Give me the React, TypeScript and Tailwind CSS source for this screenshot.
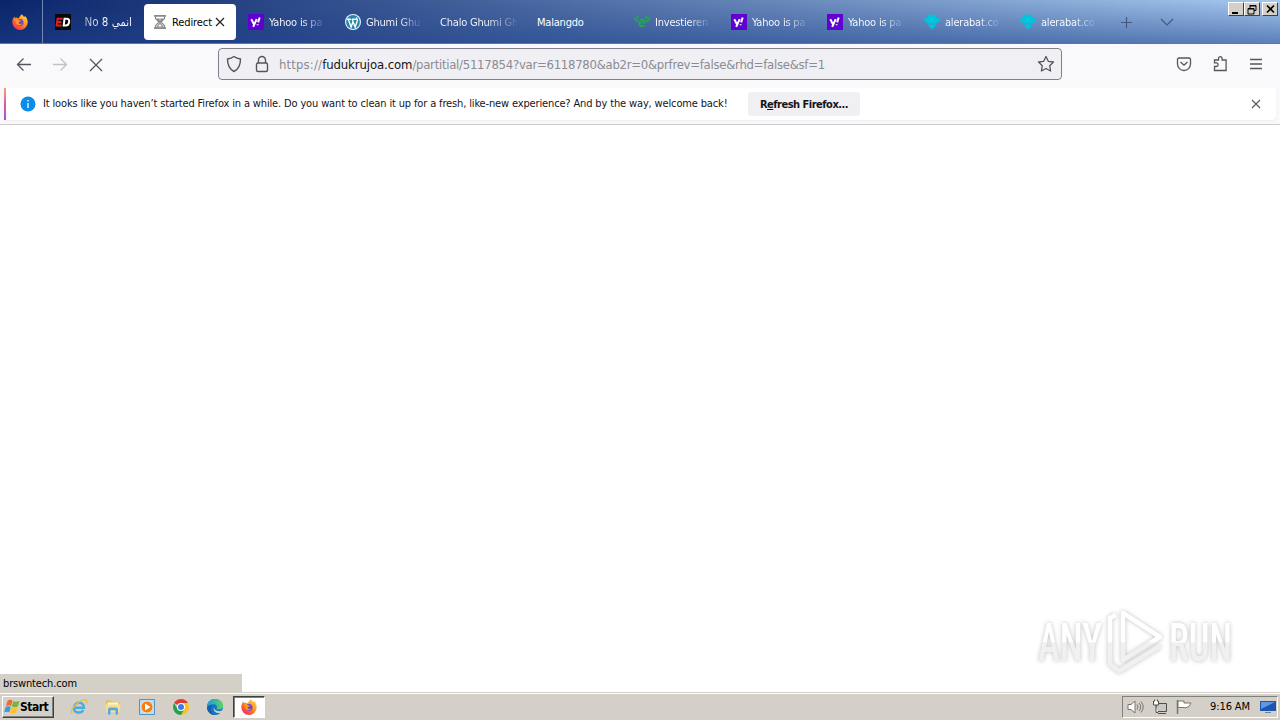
import type { ReactNode } from "react";

const uiFont = "font-['DejaVu_Sans_Condensed','DejaVu_Sans','Noto_Sans',sans-serif] [font-stretch:condensed]";

function FirefoxLogo() {
  return (
    <svg viewBox="0 0 16 16" className="size-4 shrink-0">
      <defs>
        <linearGradient id="ff" x1="1" y1="0" x2="0.2" y2="1">
          <stop offset="0" stopColor="#ffe44a" />
          <stop offset="0.45" stopColor="#ff9a1f" />
          <stop offset="0.8" stopColor="#fa4c3c" />
          <stop offset="1" stopColor="#ec2670" />
        </linearGradient>
      </defs>
      <path d="M10 .2c1 1.300 1.500 2.100 2.200 2.700L13 2c1.600 1.500 2.700 3.700 2.700 6.300A7.700 7.700 0 0 1 .3 8.300C.3 6 1.100 4.100 2.400 2.600l.5 1.500 1.800-.6 1.200 1C7.600 3.800 8 1.500 10 .2z" fill="url(#ff)" />
      <circle cx="8" cy="8.600" r="3.500" fill="#7542c9" />
      <path d="M3.200 5.200c1.500-.6 3 0 4 1l1.600.3c-.2 1.100-1.700 1.300-2.300 2 .4 1.500 2.300 2 3.800 1.100-1 2.200-5.200 2.300-6.400-.7z" fill="#ff9420" />
    </svg>
  );
}

function YahooIcon() {
  return (
    <svg viewBox="0 0 16 16" className="size-4 shrink-0">
      <path d="M0 0h16v16H0z" fill="#5f01d1" />
      <path d="M3.300 5.200 6 10.200M8.700 5.200 5.200 12.800M11.700 3.500 10.100 8.400M9.600 10.200v1" stroke="#fff" strokeWidth="2" fill="none" />
    </svg>
  );
}

function EdIcon() {
  return (
    <svg viewBox="0 0 16 16" className="size-4 shrink-0">
      <path d="M0 0h16v16H0z" fill="#080808" />
      <path d="M7.500 4.700H2.600l-1 6.700h5M2.400 8h4" stroke="#e51c23" strokeWidth="2" fill="none" />
      <path d="M9.500 4.700h2.800c3 0 2.300 6.700-1.300 6.700H8.700z" stroke="#fff" strokeWidth="2" fill="none" />
    </svg>
  );
}

function HourglassIcon() {
  return (
    <svg viewBox="0 0 16 16" className="size-4 shrink-0" fill="none" stroke="#8c8c8c">
      <path d="M2 1.800h12M2 14.200h12" strokeWidth="1.800" />
      <path d="M3.500 2v2.500L7 8l-3.500 3.500V14M12.500 2v2.500L9 8l3.500 3.500V14M5.500 5h5L8 7.500zM8 9l-3 4h6z" strokeWidth="1.200" />
    </svg>
  );
}

function WordPressIcon() {
  return (
    <svg viewBox="0 0 16 16" className="size-4 shrink-0">
      <circle cx="8" cy="8" r="8" fill="#e9f5fa" />
      <circle cx="8" cy="8" r="6.900" fill="#2585ac" />
      <path d="M2 5.200h4M7.200 5.200h4M3.300 5.200l2.800 8L8 7.600l2.200 5.600 2.100-6.300c.3-1.500-.9-2-.5-3.400M7 5l1 2.600" stroke="#fff" strokeWidth="1.400" fill="none" />
    </svg>
  );
}

function InvestIcon() {
  return (
    <svg viewBox="0 0 16 16" className="size-4 shrink-0" fill="none" stroke="#21a852" strokeWidth="1.800">
      <path d="M1 3.500c0 3 1.200 3.500 2.800 3.500M15 3.500c0 3-1.200 3.500-2.800 3.500M3.500 2v3M12.500 2v3" />
      <path d="M5.500 8.700h5.300c0-4-5.600-4-5.600 0s3.500 4.500 5.300 2.700" />
    </svg>
  );
}

function AlerabatIcon() {
  return (
    <svg viewBox="0 0 16 16" className="size-4 shrink-0" fill="#00c5dc">
      <path d="M4 .5h2.500L8 2 9.500.5H12V4h3.500v3L13 9h-1.500v3L8 15.500 4.500 12V9H3L.5 7V4H4z" />
      <path d="M5.700 9h1.200v2H5.700zM9.100 9h1.200v2H9.100z" fill="#5788c0" />
    </svg>
  );
}

type Tab = { title: string; icon?: ReactNode; width: string; fade?: boolean };

const tabs: Tab[] = [
  { title: "Yahoo is pa", icon: <YahooIcon />, width: "w-[97px]", fade: true },
  { title: "Ghumi Ghu", icon: <WordPressIcon />, width: "w-[95px]", fade: true },
  { title: "Chalo Ghumi Gh", width: "w-[97px]", fade: true },
  { title: "Malangdo", width: "w-[97px]" },
  { title: "Investieren", icon: <InvestIcon />, width: "w-[97px]", fade: true },
  { title: "Yahoo is pa", icon: <YahooIcon />, width: "w-[96px]", fade: true },
  { title: "Yahoo is pa", icon: <YahooIcon />, width: "w-[97px]", fade: true },
  { title: "alerabat.co", icon: <AlerabatIcon />, width: "w-[96px]", fade: true },
  { title: "alerabat.co", icon: <AlerabatIcon />, width: "w-[96px]", fade: true },
];

function WindowButton({ children }: { children: ReactNode }) {
  return (
    <div className="flex h-[14px] w-4 border border-t-white border-r-[#404040] border-b-[#404040] border-l-white bg-[#d4d0c8]">
      <svg viewBox="0 0 14 12" className="h-3 w-3.5">{children}</svg>
    </div>
  );
}

function TabStrip() {
  return (
    <div className="relative flex h-11 border-b border-[#6a748f] bg-[linear-gradient(180deg,#1e428c00,#1e428c8c),linear-gradient(90deg,#0a246a,#a6caf0)]">
      <div className="flex w-[43px] items-center border-r border-[#7486b4] pl-3">
        <FirefoxLogo />
      </div>
      <div className="flex w-[101px] items-center pl-3 text-white">
        <EdIcon />
        <span
          dir="rtl"
          className="mt-0.5 ml-2 w-[53px] whitespace-nowrap bg-linear-to-r from-white/50 to-white to-50% bg-clip-text text-[11.5px] text-transparent"
        >
          انمي No 8
        </span>
      </div>
      <div className="mt-1 flex h-9 w-[92px] items-center rounded bg-white pl-2 text-black">
        <HourglassIcon />
        <span className="mt-0.5 ml-1 w-[42px] whitespace-nowrap text-[11px] tracking-[-0.1px]">Redirect</span>
        <svg viewBox="0 0 12 12" className="size-3" stroke="#222" strokeWidth="1.200">
          <path d="m2 2 8 8M10 2l-8 8" />
        </svg>
      </div>
      <div className="ml-3 flex">
        {tabs.map((tab, i) => (
          <div key={i} className={`flex h-11 items-center gap-[5px] ${tab.width}`}>
            {tab.icon}
            <span
              className={`mt-0.5 whitespace-nowrap text-[11px] tracking-[-0.2px] ${tab.icon ? "w-[55px]" : "w-[77px]"} ${
                tab.fade ? "bg-linear-to-r from-white from-60% to-white/10 bg-clip-text text-transparent" : "text-white"
              }`}
            >
              {tab.title}
            </span>
          </div>
        ))}
      </div>
      <svg viewBox="0 0 60 16" className="mt-[14px] ml-0.5 h-4 w-[60px]" fill="none" stroke="#47587d" strokeWidth="1.200">
        <path d="M3 8.500h11M8.500 3v11M43 5l6 6 6-6" />
      </svg>
      <div className="absolute top-0.5 right-0.5 flex">
        <WindowButton>
          <path d="M3 9h6v2H3z" fill="#000" />
        </WindowButton>
        <WindowButton>
          <path d="M5 2.500h6v5H9M5 2v3M3 5.500h6V11H3zM3 6h6M5 3h6" stroke="#000" fill="none" />
        </WindowButton>
        <div className="w-0.5" />
        <WindowButton>
          <path d="m4 2.500 7 7M11 2.500l-7 7" stroke="#000" strokeWidth="1.700" />
        </WindowButton>
      </div>
    </div>
  );
}

function Toolbar() {
  return (
    <div className="flex h-11 items-center bg-[#f9f9fb] pb-1">
      <svg viewBox="0 0 110 20" className="ml-[10px] h-5 w-[110px]" fill="none" stroke="#55555f" strokeWidth="1.300">
        <path d="M21 10.500H7.500m6-6-6 6 6 6" />
        <path d="M43 10.500h13.500m-6-6 6 6-6 6" stroke="#c2c2c6" />
        <path d="m80 5 12 12m0-12L80 17" />
      </svg>
      <div className="ml-[98px] flex h-8 w-[844px] items-center rounded border border-[#80808a] bg-[#f0f0f4] px-[7px]">
        <svg viewBox="0 0 44 18" className="h-[18px] w-11" fill="none" stroke="#55555f" strokeWidth="1.400">
          <path d="M8 1.500c2 1.500 4 2.200 6.500 2.500 0 6-1.500 10-6.500 12.500C3 14 1.500 10 1.500 4 4 3.700 6 3 8 1.500z" />
          <rect x="30.500" y="8" width="11" height="8.500" rx="1.500" />
          <path d="M32.500 8V5a3.500 3.500 0 0 1 7 0v3" />
        </svg>
        <span className="ml-[9px] flex-1 pt-px whitespace-nowrap text-[13px] tracking-[-0.27px] text-[#8b8b92]">
          <span className="tracking-[0.15px]">https://</span>
          <span className="tracking-[-0.1px] text-[#15141a]">fudukrujoa.com</span>
          /partitial/5117854?var=6118780&amp;ab2r=0&amp;prfrev=false&amp;rhd=false&amp;sf=1
        </span>
        <svg viewBox="0 0 18 18" className="mr-[-1px] size-[18px]" fill="none" stroke="#55555f" strokeWidth="1.300" strokeLinejoin="round">
          <path d="m9 1.500 2.300 4.800 5.200.7-3.800 3.700.9 5.300L9 13.500 4.400 16l.9-5.300L1.500 7l5.200-.7z" />
        </svg>
      </div>
      <svg viewBox="0 0 90 18" className="ml-[113px] h-[18px] w-[90px]" fill="none" stroke="#55555f" strokeWidth="1.300">
        <path d="M4 3h10q1.500 0 1.500 1.500V9a6.500 6.500 0 0 1-13 0V4.500Q2.500 3 4 3zM5.500 7 9 10.200 12.500 7" />
        <path d="M39.500 15.500v-4h1.800a1.800 1.800 0 0 0 0-3.600h-1.800V5h4V3.500a1.800 1.800 0 0 1 3.600 0V5h4v10.500z" />
        <path d="M75 4.500h12M75 9h12M75 13.500h12" />
      </svg>
    </div>
  );
}

function InfoBar() {
  return (
    <div className="h-[37px] border-b border-[#cccccf] bg-[#f9f9fb] px-1">
      <div className="flex h-8 items-center rounded-r bg-white shadow-xs">
        <div className="h-8 w-0.5 bg-linear-to-b from-[#f5a17a] via-[#e255a1] to-[#9059d8]" />
        <svg viewBox="0 0 16 16" className="ml-[14px] size-4">
          <circle cx="8" cy="8" r="7.500" fill="#0b8ce9" />
          <path d="M8 4v1.500M8 7v5" stroke="#fff" strokeWidth="1.300" />
        </svg>
        <span className="ml-[7px] w-[705px] whitespace-nowrap text-[11px] tracking-[-0.145px] text-[#15141a]">
          It looks like you haven’t started Firefox in a while. Do you want to clean it up for a fresh, like-new experience? And by the way, welcome back!
        </span>
        <button className="h-6 w-28 rounded bg-[#f0f0f2] pt-0.5 text-[11px] font-bold tracking-[-0.5px] text-[#15141a]">
          R<span className="underline">e</span>fresh Firefox...
        </button>
        <svg viewBox="0 0 12 12" className="mr-3.5 ml-auto size-3" stroke="#55555f" strokeWidth="1.100">
          <path d="m2 2 8 8M10 2l-8 8" />
        </svg>
      </div>
    </div>
  );
}

function Watermark() {
  return (
    <svg
      viewBox="0 0 204 72"
      className="absolute right-[42px] bottom-[14px] h-[72px] w-[204px] overflow-visible drop-shadow-[0_0_2px_#00000040]"
    >
      <defs>
        <linearGradient id="mark" x1="0" y1="0" x2="0" y2="72" gradientUnits="userSpaceOnUse">
          <stop offset="0.5" stopColor="#ffffff" />
          <stop offset="0.51" stopColor="#f0f0f0" />
        </linearGradient>
      </defs>
      <g fill="url(#mark)" className="font-['Roboto',sans-serif] text-[53px] font-medium">
        <text x="4" y="55" textLength="64" lengthAdjust="spacingAndGlyphs">ANY</text>
        <text x="135" y="55" textLength="63" lengthAdjust="spacingAndGlyphs">RUN</text>
      </g>
      <g fill="none" stroke="url(#mark)" strokeWidth="4.500" strokeLinejoin="round">
        <path d="M89 7v47l37-23z" />
        <path d="M82 9l-6 3v46l9 7 41-25" />
      </g>
    </svg>
  );
}

function WindowsFlag() {
  return (
    <svg viewBox="0 0 16 16" className="size-4 shrink-0">
      <path d="M3.500 2c1.500-1.500 3.500-1.500 5-.6L7 7C5.300 6 3.300 6.200 1.900 7.300z" fill="#ed6932" />
      <path d="M9.200 2c1.800 1 3.800 1 6.300-.2L14 7.200c-1.900 1.200-4.300 1.200-6.300.2z" fill="#79b640" />
      <path d="M1.600 8.200c1.500-1.100 3.500-1.100 5.100-.3l-1.500 5.400c-1.600-.9-3.600-.8-5.100.3z" fill="#4197d8" />
      <path d="M7.400 8.300c1.800 1 4.200 1 6.300-.1l-1.500 5.300c-1.900 1.200-4.300 1.300-6.300.3z" fill="#f9c32d" />
    </svg>
  );
}

function ExplorerIcon() {
  return (
    <svg viewBox="0 0 18 18" className="size-[18px]" fill="none">
      <path d="M4 9.800h10c.4-6.500-9.500-6.700-10 0-.4 5.500 7.200 6.200 9.200 2.200" stroke="#46aee6" strokeWidth="2.500" />
      <path d="M2 15.500C-1 11 12-.5 16.500 2.200c1 .8.500 2-.3 3.300" stroke="#edbd3b" strokeWidth="1.300" />
    </svg>
  );
}

function FolderIcon() {
  return (
    <svg viewBox="0 0 18 18" className="size-[18px]">
      <path d="M2 2.500h5l1 1.500h8v10H2z" fill="#dfc15e" />
      <path d="M3.500 4.500h11V8h-11z" fill="#f9f5df" />
      <path d="M1.500 6.500h15l-.8 7.500H2z" fill="#f6e08d" />
      <path d="M4 16.500v-5q0-2 2-2h6q2 0 2 2v5h-2.500v-4.200h-5v4.200z" fill="#56aadb" />
    </svg>
  );
}

function MediaPlayerIcon() {
  return (
    <svg viewBox="0 0 18 18" className="size-[18px]">
      <path d="M1.500 1.500h15v15h-15z" fill="#b9dcf5" stroke="#4e94c9" />
      <circle cx="9" cy="9" r="6" fill="#f1801c" stroke="#fff0d5" strokeWidth=".7" />
      <path d="m7 5.500 5.500 3.500L7 12.500z" fill="#fff" />
    </svg>
  );
}

function ChromeIcon() {
  return (
    <svg viewBox="0 0 18 18" className="size-[18px]">
      <path d="M9 9 2.100 5A8 8 0 0 1 15.900 5z" fill="#e33b2e" />
      <path d="M9 9V5h6.900A8 8 0 0 1 9 17l3.500-6z" fill="#fcc31e" />
      <path d="M9 9l3.500 2L9 17A8 8 0 0 1 2.100 5l3.400 6z" fill="#29a04b" />
      <circle cx="9" cy="9" r="4" fill="#fff" />
      <circle cx="9" cy="9" r="3" fill="#3a7be8" />
    </svg>
  );
}

function EdgeIcon() {
  return (
    <svg viewBox="0 0 18 18" className="size-[18px]">
      <defs>
        <linearGradient id="edge">
          <stop offset="0" stopColor="#229bd8" />
          <stop offset="1" stopColor="#5ed35e" />
        </linearGradient>
      </defs>
      <circle cx="9" cy="9" r="8" fill="#1176c9" />
      <path d="M1 9C1-1.500 17-1.300 17 8c0 4-5.500 4.300-6.500 2.500.9-1 .7-4-2.500-4.200C4.800 6 2 7.500 1 9z" fill="url(#edge)" />
      <path d="M17.200 12C13 14.500 8 12.500 8 9.500c-1.500 4 3 6.500 7.500 5.200z" fill="#d4d0c8" />
      <path d="M6.500 7C3.500 9 4.500 15.500 9.500 17 5 17.300 1 14 1 9.500 2 8 4.500 6.500 6.500 7z" fill="#155fae" />
    </svg>
  );
}

function Taskbar() {
  return (
    <div className="flex h-7 shrink-0 border-t border-[#d4d0c8] bg-[#d4d0c8]">
      <div className="flex w-full items-center border-t border-white px-0.5">
        <button className="flex h-[22px] w-[52px] items-center border border-t-white border-r-[#404040] border-b-[#404040] border-l-white pl-px text-[12px] font-bold tracking-[-0.5px] text-black shadow-[inset_-1px_-1px_#808080]">
          <WindowsFlag />
          Start
        </button>
        <div className="ml-4 flex items-center gap-4">
          <ExplorerIcon />
          <FolderIcon />
          <MediaPlayerIcon />
          <ChromeIcon />
          <EdgeIcon />
        </div>
        <div className="ml-[9px] flex h-[22px] w-8 items-center justify-center border border-t-[#404040] border-r-white border-b-white border-l-[#404040] bg-white shadow-[inset_1px_1px_#808080]">
          <FirefoxLogo />
        </div>
        <div className="ml-auto flex h-[22px] w-[156px] items-center border border-t-[#808080] border-r-white border-b-white border-l-[#808080] pl-1.5">
          <svg viewBox="0 0 66 18" className="h-[18px] w-[66px] -translate-x-0.5" fill="#fff" stroke="#77756f">
            <path d="M1 6.500h3L8 3v12l-4-3.500H1z" />
            <path d="M10 6.500q2 2.500 0 5M12 5q3.500 4 0 8M14 3.500q4.500 5.500 0 11" fill="none" />
            <path d="M29.500 5.500h10v8h-10z" fill="#c9c8c3" stroke="#4e4e4e" />
            <path d="M31 15.500h8M26.500 3v4h5V3M27.500 1.500v2M30.500 1.500v2M29 7v7.500h2" stroke="#4e4e4e" />
            <path d="M50.500 2v14" strokeWidth="1.500" />
            <path d="M51 3h6v2h7l-2 3.500-4 1.500-1-.5h-6z" />
          </svg>
          <span className="ml-[15px] w-[42px] whitespace-nowrap text-[11px] tracking-[-0.1px] text-black">9:16 AM</span>
          <svg viewBox="0 0 16 14" className="ml-2 h-3.5 w-4">
            <path d="M0 1h16v10H0z" fill="#1e55ae" />
            <path d="M1 2h14L1 9z" fill="#5e98e2" />
            <path d="M5 12h6v1H5z" fill="#6682a6" />
          </svg>
        </div>
      </div>
    </div>
  );
}

export default function App() {
  return (
    <div className={`flex h-[720px] w-[1280px] flex-col overflow-hidden bg-white ${uiFont}`}>
      <TabStrip />
      <Toolbar />
      <InfoBar />
      <main className="relative flex flex-1 flex-col justify-end">
        <Watermark />
        <div className="flex h-[18px] w-[242px] items-center bg-[#d4d0c8] pt-[3px] pl-[3px] text-[11px] tracking-[-0.15px] text-black">
          brswntech.com
        </div>
      </main>
      <Taskbar />
    </div>
  );
}
